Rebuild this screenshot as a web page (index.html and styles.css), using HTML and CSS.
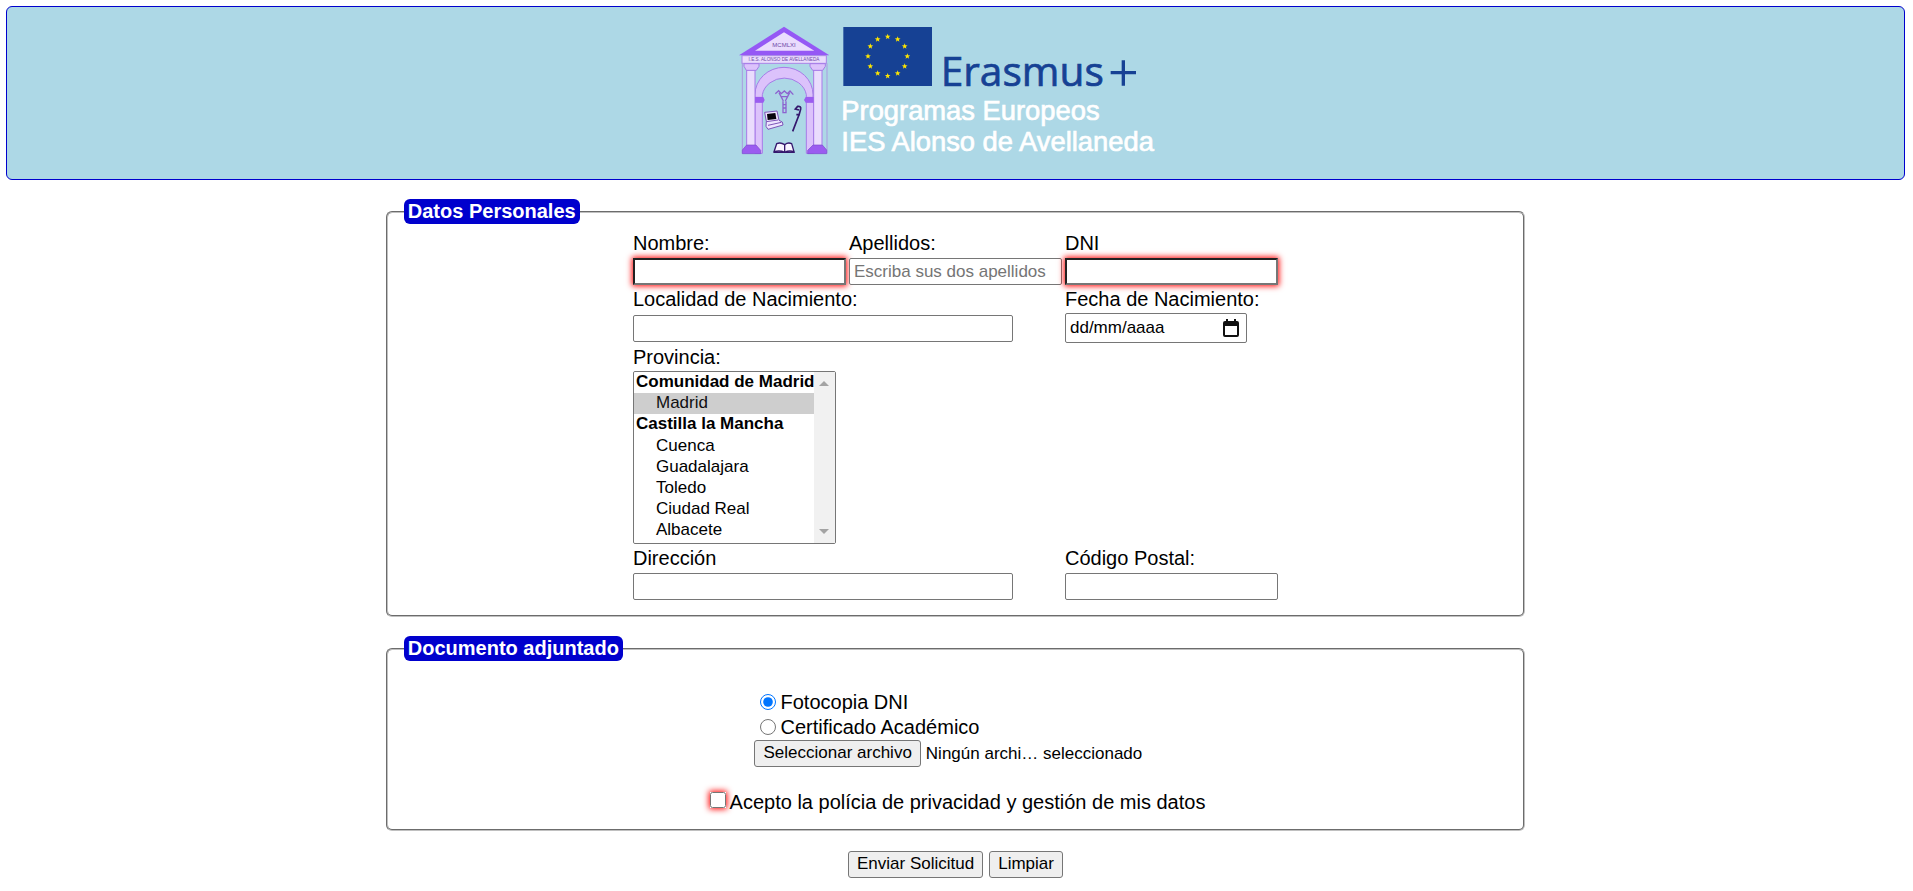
FILE: index.html
```html
<!DOCTYPE html>
<html lang="es">
<head>
<meta charset="utf-8">
<title>Programas Europeos - IES Alonso de Avellaneda</title>
<link rel="stylesheet" href="styles.css">
</head>
<body>
<header class="banner">
  <svg class="logo" viewBox="0 0 1416 480" role="img" aria-label="Erasmus+ Programas Europeos IES Alonso de Avellaneda">
    <defs><path id="star" fill="#ffe600" d="M0-9 2.2-3 8.6-2.8 3.5 1.1 5.3 7.3 0 3.7-5.3 7.3-3.5 1.1-8.6-2.8-2.2-3z"/></defs>
    <!-- portico -->
    <path fill="#9558f5" d="M192 50 328 136H57z"/>
    <path fill="#eadcfd" d="M192 67 283 122H105z"/>
    <text class="tiny" x="192" y="112" font-size="18" text-anchor="middle">MCMLXI</text>
    <rect x="66" y="137" width="253" height="23" fill="#eadcfd" stroke="#a884e8" stroke-width="3"/>
    <text class="tiny" x="192" y="154" font-size="14" text-anchor="middle">I.E.S. ALONSO DE AVELLANEDA</text>
    <path d="M67 160V430M321 160V430" stroke="#a99be0" stroke-width="3"/>
    <path fill="#dcc2fb" stroke="#a77be8" stroke-width="3" d="M105 262V254A87 82 0 0 1 279 254V262H259V254A67 60 0 0 0 127 254V262z"/>
    <g fill="#dcc2fb" stroke="#a77be8" stroke-width="3">
      <path d="M105 276H127V430H105zM259 276H281V430H259z"/>
      <path fill="#eadcfd" d="M80 180H105V408H80zM281 180H306V408H281z"/>
      <path d="M72 161H117V169L109 181H79L72 169zM270 161H316V169L308 181H278L270 169z"/>
    </g>
    <path fill="#9b5cf0" d="M105 261H130L134 270 130 278H105zM257 261H281V278H257L252 270z"/>
    <path fill="#9b5cf0" stroke="#7c4bcf" stroke-width="2" d="M80 405H108L122 421V431H67V420zM279 405H307L320 420V431H263V421z"/>
    <!-- emblem -->
    <path fill="none" stroke="#8c62cf" stroke-width="4" d="M166 251 176 242 184 251 193 243 202 251 210 243 220 254M177 248 190 273M209 248 196 273M185 260H201M189 274V308H198V274M189 284H198M189 294H198"/>
    <!-- computer -->
    <path fill="#eee4ff" stroke="#7d55b8" stroke-width="3" d="M134 307 171 303 177 331 187 336 189 345 144 358 138 349 139 334z"/>
    <path fill="#08050d" d="M141 312 166 309 169 327 143 330z"/>
    <path stroke="#7d55b8" stroke-width="3" d="M139 335 174 330M144 346 184 337"/>
    <!-- crosier -->
    <path fill="none" stroke="#34176d" stroke-width="5" d="M218 364 238 312 242 297Q244 288 233 289L226 297 237 300M229 314H240"/>
    <!-- book -->
    <path fill="#f8f4ff" stroke="#34176d" stroke-width="4" d="M170 401Q182 396 194 404Q204 396 215 401L222 425Q207 420 194 427Q180 420 162 425z"/>
    <path fill="none" stroke="#34176d" stroke-width="4" d="M194 404V427M161 427H224"/>
    <!-- flag -->
    <rect x="370" y="51" width="266" height="177" fill="#164194"/>
    <use href="#star" x="503" y="80"/><use href="#star" x="533" y="88"/><use href="#star" x="554" y="109"/>
    <use href="#star" x="562" y="139"/><use href="#star" x="554" y="169"/><use href="#star" x="533" y="190"/>
    <use href="#star" x="503" y="198"/><use href="#star" x="473" y="190"/><use href="#star" x="451" y="169"/>
    <use href="#star" x="444" y="139"/><use href="#star" x="451" y="109"/><use href="#star" x="473" y="88"/>
    <text class="brand" x="662" y="227">Erasmus</text>
    <path d="M1172 188H1248M1210 151V227" stroke="#164194" stroke-width="10"/>
    <text class="school" x="364" y="331">Programas Europeos</text>
    <text class="school" x="364" y="423">IES Alonso de Avellaneda</text>
  </svg>
</header>
<form class="form">
  <fieldset class="group">
    <legend class="title">Datos Personales</legend>
    <div class="grid">
      <div class="field"><label for="nombre">Nombre:</label><input class="box required" id="nombre" type="text" required></div>
      <div class="field"><label for="apellidos">Apellidos:</label><input class="box" id="apellidos" type="text" placeholder="Escriba sus dos apellidos"></div>
      <div class="field"><label for="dni">DNI</label><input class="box required" id="dni" type="text" required></div>
      <div class="field wide"><label for="localidad">Localidad de Nacimiento:</label><input class="box long centered" id="localidad" type="text"></div>
      <div class="field tight"><label for="fecha">Fecha de Nacimiento:</label>
        <div class="date"><input class="date-text" id="fecha" type="text" value="dd/mm/aaaa"><button class="date-button" type="button" aria-label="Abrir calendario"><svg class="calendar" viewBox="0 0 16 18"><path fill="#111" fill-rule="evenodd" d="M2 2H3V0H5V2H11V0H13V2H14Q16 2 16 4V16Q16 18 14 18H2Q0 18 0 16V4Q0 2 2 2zM2 7V16H14V7z"/></svg></button></div>
      </div>
      <div class="field full tight"><label for="provincia">Provincia:</label>
        <div class="list-frame">
          <select class="list" id="provincia" size="8">
            <optgroup label="Comunidad de Madrid"><option selected>Madrid</option></optgroup>
            <optgroup label="Castilla la Mancha"><option>Cuenca</option><option>Guadalajara</option><option>Toledo</option><option>Ciudad Real</option><option>Albacete</option></optgroup>
          </select>
          <div class="track" aria-hidden="true">
            <svg class="arrow" viewBox="0 0 10 5"><path fill="#a3a3a3" d="M0 5 5 0 10 5z"/></svg>
            <svg class="arrow" viewBox="0 0 10 5"><path fill="#a3a3a3" d="M0 0 5 5 10 0z"/></svg>
          </div>
        </div>
      </div>
      <div class="field wide"><label for="direccion">Dirección</label><input class="box long" id="direccion" type="text"></div>
      <div class="field"><label for="postal">Código Postal:</label><input class="box" id="postal" type="text"></div>
    </div>
  </fieldset>
  <fieldset class="group">
    <legend class="title">Documento adjuntado</legend>
    <div class="document">
      <label class="choice"><input class="radio" type="radio" name="doc" checked>Fotocopia DNI</label>
      <label class="choice"><input class="radio" type="radio" name="doc">Certificado Académico</label>
      <div class="file"><button class="button" type="button">Seleccionar archivo</button><span>Ningún archi… seleccionado</span></div>
    </div>
    <label class="accept"><span class="glow"><input class="check" type="checkbox" required></span>Acepto la polícia de privacidad y gestión de mis datos</label>
  </fieldset>
  <div class="actions"><button class="button" type="submit">Enviar Solicitud</button><button class="button" type="reset">Limpiar</button></div>
</form>
</body>
</html>
```
FILE: styles.css
```css
* { box-sizing: border-box; }
body {
  margin: 6px 8px 6px 6px;
  background: #fff;
  color: #000;
  font: 20px/23px "Liberation Sans", Arial, sans-serif;
}
.banner {
  display: flex;
  justify-content: center;
  padding: 3px 0 9px;
  border: 1px solid #0000cd;
  border-radius: 6px;
  background: lightblue;
}
.logo { width: 472px; height: 160px; }
.tiny { font-family: "Liberation Sans", Arial, sans-serif; fill: #6d4aa8; }
.brand {
  font: 122px "Open Sans", sans-serif;
  fill: #164194;
  stroke: #164194;
  stroke-width: 2px;
}
.school {
  font: 82px "Liberation Sans", Arial, sans-serif;
  fill: #fff;
  stroke: #fff;
  stroke-width: 2px;
}
.form {
  display: flex;
  flex-direction: column;
  align-items: center;
  gap: 19px;
  padding-top: 19px;
}
.group {
  width: 60%;
  margin: 0;
  padding: 8px 16px 15px;
  border: 2px groove #c0c0c0;
  border-radius: 6px;
}
.title {
  padding: 1px 4px;
  border-radius: 6px;
  background: #0000cd;
  color: #fff;
  font-weight: bold;
}
.grid {
  display: grid;
  grid-template-columns: repeat(3, 213px);
  justify-content: center;
  gap: 3px;
}
.field {
  display: flex;
  flex-direction: column;
  align-items: flex-start;
  gap: 3px;
}
.tight { gap: 2px; }
.wide { grid-column: span 2; }
.full { grid-column: span 3; }
.box {
  width: 100%;
  height: 27px;
  padding: 1px 4px;
  border: 1px solid #767676;
  border-radius: 2px;
  background: #fff;
  font: 17px "Liberation Sans", Arial, sans-serif;
}
.box::placeholder { color: #757575; }
.long { width: 380px; }
.centered { margin: auto 0; }
.required {
  border: 2px solid;
  border-color: #212121 #767676 #767676 #212121;
  border-radius: 0;
  box-shadow: 0 0 6px 1px red;
}
.date {
  display: flex;
  align-items: center;
  width: 182px;
  height: 30px;
  padding: 0 7px 0 4px;
  border: 1px solid #767676;
  border-radius: 2px;
}
.date-text {
  flex: 1;
  min-width: 0;
  padding: 0;
  border: 0;
  font: 17px "Liberation Sans", Arial, sans-serif;
}
.date-button { display: flex; padding: 0; border: 0; background: none; }
.calendar { width: 16px; height: 18px; }
.list-frame {
  display: flex;
  width: 203px;
  height: 173px;
  border: 1px solid #767676;
  border-radius: 2px;
}
.list {
  flex: 1;
  min-width: 0;
  padding: 0;
  border: 0;
  font: 17px "Liberation Sans", Arial, sans-serif;
}
.list option { min-height: 21px; padding: 0 0 0 22px; }
.track {
  display: flex;
  flex-direction: column;
  align-items: center;
  justify-content: space-between;
  width: 21px;
  padding: 9px 0;
  background: #f1f1f1;
}
.arrow { width: 10px; height: 5px; }
.document {
  display: flex;
  flex-direction: column;
  align-items: flex-start;
  width: 402px;
  margin: 21px auto 24px;
}
.choice { display: flex; align-items: center; height: 25px; }
.radio { width: 16px; height: 16px; margin: 0 4px 2px 6px; }
.file { display: flex; align-items: center; gap: 5px; font-size: 17px; }
.button {
  height: 27px;
  padding: 0 8px 2px;
  border: 1px solid #767676;
  border-radius: 3px;
  background: #efefef;
  color: #000;
  font: 17px "Liberation Sans", Arial, sans-serif;
}
.accept { display: flex; align-items: center; justify-content: center; }
.glow {
  display: flex;
  margin: 0 4px 5px;
  background: #fff;
  box-shadow: 0 0 6px 1px red;
}
.check { width: 16px; height: 16px; margin: 0; }
.actions { display: flex; gap: 6px; margin-top: 1px; }
```
